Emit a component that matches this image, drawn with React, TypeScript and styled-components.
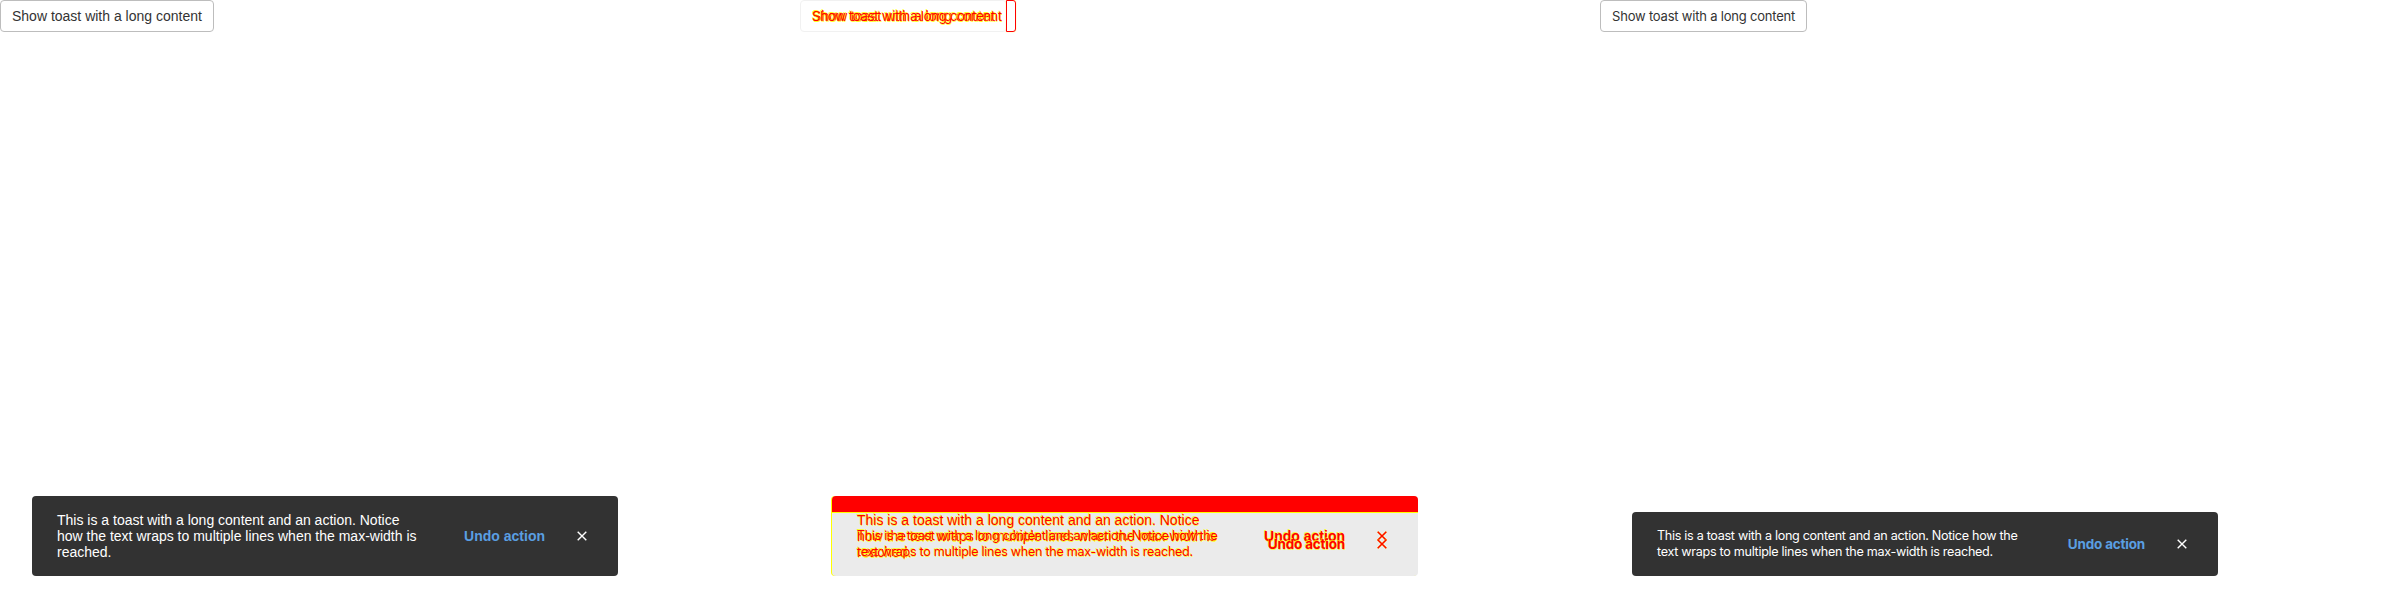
import React from "react"
import styled, { createGlobalStyle, css } from "styled-components"

interface Face {
  family: string
  buttonSize: number
  buttonTracking: number
  bodySize: number
  bodyTracking: number
  actionSize: number
}

const ARIAL: Face = {
  family: `"Liberation Sans", Arial, sans-serif`,
  buttonSize: 14,
  buttonTracking: 0,
  bodySize: 14,
  bodyTracking: 0,
  actionSize: 14,
}

const INTER: Face = {
  family: `Inter, "Noto Sans", sans-serif`,
  buttonSize: 13,
  buttonTracking: -0.2,
  bodySize: 12.6,
  bodyTracking: -0.3,
  actionSize: 13.5,
}

const DIFF_RED = "#ff0000"
const DIFF_YELLOW = "#ffff00"

const GlobalStyle = createGlobalStyle`
  html, body {
    margin: 0;
    padding: 0;
    background: #ffffff;
  }
  * {
    box-sizing: border-box;
  }
`

const diffInk = css`
  color: ${DIFF_RED};
  text-shadow: 0.6px 0.6px 0 rgba(255, 255, 0, 0.7), -0.6px -0.6px 0 rgba(255, 255, 0, 0.7);
`

const Page = styled.div`
  display: flex;
  width: 2400px;
  height: 600px;
  overflow: hidden;
`

const Panel = styled.section`
  position: relative;
  flex: 0 0 800px;
  height: 600px;
  overflow: hidden;
  background: #ffffff;
`

const Overlay = styled.div`
  position: absolute;
  inset: 0;
  pointer-events: none;
`

interface ToneProps {
  $face: Face
  $diff?: boolean
}

const TriggerButton = styled.button<ToneProps>`
  display: inline-block;
  margin: 0;
  height: 32px;
  padding: 6px 11px;
  font-family: ${(p) => p.$face.family};
  font-size: ${(p) => p.$face.buttonSize}px;
  letter-spacing: ${(p) => p.$face.buttonTracking}px;
  line-height: 18px;
  color: #333333;
  background: #ffffff;
  border: 1px solid #bdbdbd;
  border-radius: 4px;
  white-space: nowrap;
  cursor: pointer;

  ${(p) =>
    p.$diff &&
    css`
      background: transparent;
      border-color: transparent;
      ${diffInk}
    `}
`

const Toast = styled.div<ToneProps>`
  position: absolute;
  left: 32px;
  bottom: 24px;
  width: 586px;
  display: flex;
  align-items: center;
  padding: 16px 20px 16px 25px;
  border-radius: 4px;
  background: #323232;
  color: #ffffff;
  font-family: ${(p) => p.$face.family};
  font-size: ${(p) => p.$face.bodySize}px;
  letter-spacing: ${(p) => p.$face.bodyTracking}px;
  line-height: 16px;

  ${(p) =>
    p.$diff &&
    css`
      background: transparent;
      ${diffInk}
    `}
`

const Message = styled.div`
  flex: 1 1 auto;
  min-width: 0;
`

const ActionButton = styled.button<ToneProps>`
  flex: 0 0 auto;
  margin: 0 21px 0 36px;
  padding: 0;
  border: none;
  background: none;
  font-family: ${(p) => p.$face.family};
  font-size: ${(p) => p.$face.actionSize}px;
  letter-spacing: ${(p) => p.$face.buttonTracking}px;
  line-height: 16px;
  font-weight: 700;
  color: #5a9fe2;
  white-space: nowrap;
  cursor: pointer;

  ${(p) => p.$diff && diffInk}
`

const CloseButton = styled.button<{ $diff?: boolean }>`
  flex: 0 0 32px;
  width: 32px;
  height: 32px;
  display: flex;
  align-items: center;
  justify-content: center;
  padding: 0;
  border: none;
  background: none;
  color: ${(p) => (p.$diff ? DIFF_RED : "#ffffff")};
  cursor: pointer;

  svg {
    filter: ${(p) => (p.$diff ? `drop-shadow(0 0 0.6px ${DIFF_YELLOW})` : "none")};
  }
`

/* base of the diff panel: faded pixels that both sides share, red where they differ */
const ButtonTrace = styled.div`
  display: flex;
  align-items: stretch;
`

const FadedButton = styled(TriggerButton)`
  color: transparent;
  border-color: #f1f1f1;
`

const GapMark = styled.span`
  width: 10px;
  height: 32px;
  margin-left: -1px;
  border: 1px solid ${DIFF_RED};
  border-radius: 0 3px 3px 0;
  box-shadow: 0 0 1px ${DIFF_YELLOW};
`

const ToastTrace = styled.div`
  position: absolute;
  left: 32px;
  bottom: 24px;
  width: 586px;
  height: 80px;
  border-radius: 4px;
  overflow: hidden;
  background: #ebebeb;
  box-shadow: -1px 0 0 ${DIFF_YELLOW};

  &::before {
    content: "";
    display: block;
    height: 16px;
    background: ${DIFF_RED};
    border-bottom: 1px solid ${DIFF_YELLOW};
  }
`

const CloseIcon = () => (
  <svg width="10" height="10" viewBox="0 0 10 10" fill="none">
    <path d="M0.7 0.7 L9.3 9.3 M9.3 0.7 L0.7 9.3" stroke="currentColor" strokeWidth="1.4" />
  </svg>
)

interface SceneProps {
  face: Face
  diff?: boolean
}

const Scene: React.FC<SceneProps> = ({ face, diff }) => (
  <>
    <TriggerButton $face={face} $diff={diff}>
      Show toast with a long content
    </TriggerButton>
    <Toast $face={face} $diff={diff} role="status">
      <Message>
        This is a toast with a long content and an action. Notice how the text wraps to multiple
        lines when the max-width is reached.
      </Message>
      <ActionButton $face={face} $diff={diff}>
        Undo action
      </ActionButton>
      <CloseButton $diff={diff} aria-label="Close">
        <CloseIcon />
      </CloseButton>
    </Toast>
  </>
)

const App: React.FC = () => (
  <Page>
    <GlobalStyle />

    <Panel>
      <Scene face={ARIAL} />
    </Panel>

    <Panel>
      <ButtonTrace>
        <FadedButton $face={INTER}>Show toast with a long content</FadedButton>
        <GapMark />
      </ButtonTrace>
      <ToastTrace />
      <Overlay>
        <Scene face={ARIAL} diff />
      </Overlay>
      <Overlay>
        <Scene face={INTER} diff />
      </Overlay>
    </Panel>

    <Panel>
      <Scene face={INTER} />
    </Panel>
  </Page>
)

export default App
